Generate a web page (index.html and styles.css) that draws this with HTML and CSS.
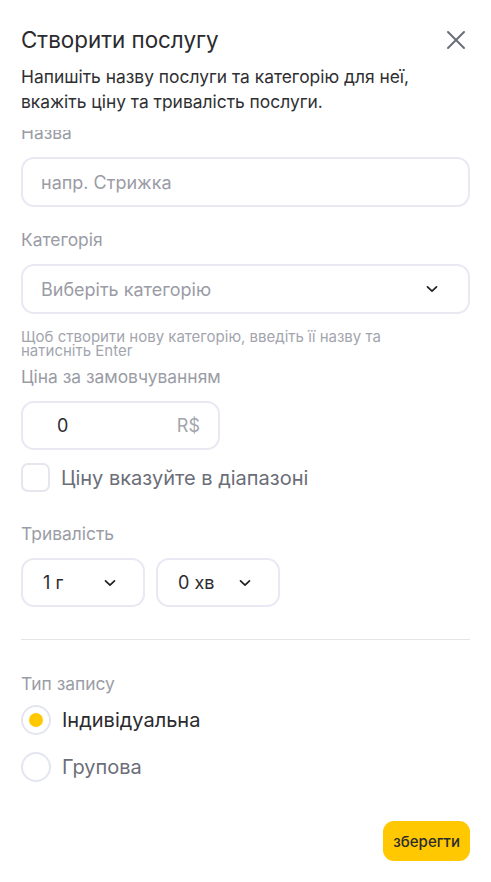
FILE: index.html
```html
<!DOCTYPE html>
<html lang="uk">
<head>
<meta charset="utf-8">
<link rel="stylesheet" href="styles.css">
</head>
<body>
<div class="modal">
  <div class="header">
    <div class="title-row">
      <h1 class="title">Створити послугу</h1>
      <button class="close" aria-label="close">
        <svg width="20" height="20" viewBox="0 0 20 20"><path d="M2 2 L18 18 M18 2 L2 18" stroke="#6b6e78" stroke-width="2" stroke-linecap="round" fill="none"/></svg>
      </button>
    </div>
    <p class="desc">Напишіть назву послуги та категорію для неї, вкажіть ціну та тривалість послуги.</p>
  </div>
  <div class="scroll">
    <div class="content">
      <label class="label">Назва</label>
      <div class="input wide"><span class="placeholder">напр. Стрижка</span></div>

      <label class="label mt">Категорія</label>
      <div class="input wide select"><span class="placeholder">Виберіть категорію</span>
        <svg class="chev" width="12" height="8" viewBox="0 0 12 8"><path d="M1.5 1.8 L6 6.2 L10.5 1.8" stroke="#222" stroke-width="1.7" fill="none" stroke-linecap="round" stroke-linejoin="round"/></svg>
      </div>
      <p class="hint">Щоб створити нову категорію, введіть її назву та натисніть Enter</p>

      <label class="label after-hint">Ціна за замовчуванням</label>
      <div class="input price"><span class="value">0</span><span class="currency">R$</span></div>

      <div class="check-row">
        <span class="checkbox"></span>
        <span class="check-text">Ціну вказуйте в діапазоні</span>
      </div>

      <label class="label mt2">Тривалість</label>
      <div class="duration">
        <div class="input small"><span class="value">1 г</span>
          <svg class="chev" width="12" height="8" viewBox="0 0 12 8"><path d="M1.5 1.8 L6 6.2 L10.5 1.8" stroke="#222" stroke-width="1.7" fill="none" stroke-linecap="round" stroke-linejoin="round"/></svg>
        </div>
        <div class="input small"><span class="value">0 хв</span>
          <svg class="chev" width="12" height="8" viewBox="0 0 12 8"><path d="M1.5 1.8 L6 6.2 L10.5 1.8" stroke="#222" stroke-width="1.7" fill="none" stroke-linecap="round" stroke-linejoin="round"/></svg>
        </div>
      </div>

      <hr class="divider">

      <label class="label mt3">Тип запису</label>
      <div class="radio-row first">
        <span class="radio checked"><span class="dot"></span></span>
        <span class="radio-text dark">Індивідуальна</span>
      </div>
      <div class="radio-row second">
        <span class="radio"></span>
        <span class="radio-text">Групова</span>
      </div>

      <div class="actions">
        <button class="save">зберегти</button>
      </div>
    </div>
  </div>
</div>
</body>
</html>
```

FILE: styles.css
```css
* { box-sizing: border-box; }
html, body { margin: 0; padding: 0; background: #fff; }
body { font-family: Inter, "Noto Sans", sans-serif; color: #2b2b2e; }
.modal { width: 491px; height: 882px; background: #fff; overflow: hidden; display: flex; flex-direction: column; }
.header { padding: 25px 21px 0 21px; }
.title-row { display: flex; justify-content: space-between; align-items: center; }
.title { margin: 0; font-size: 22.4px; font-weight: 400; line-height: 30px; color: #2b2b2e; }
.close { border: 0; background: none; padding: 0; margin-right: 4px; width: 20px; height: 20px; display: flex; }
.desc { margin: 9px 0 0 0; font-size: 17.4px; line-height: 25px; color: #2f2f33; }
.scroll { flex: 1; overflow: hidden; margin-top: 16px; }
.content { padding: 0 21px; margin-top: -7px; display: flex; flex-direction: column; }
.label { display: block; font-size: 17.4px; line-height: 20px; color: #9a9ca6; }
.label.mt { margin-top: 23px; }
.label.after-hint { margin-top: 9px; }
.label.mt2 { margin-top: 32px; }
.label.mt3 { margin-top: 34px; }
.input { margin-top: 14px; height: 50px; border: 2px solid #e8e9f3; border-radius: 13px; display: flex; align-items: center; font-size: 18px; }
.input.wide { width: 449px; padding: 0 18px; }
.select { justify-content: space-between; }
.select .chev { margin-right: 12px; }
.placeholder { color: #9a9ca6; }
.value { color: #2b2b2e; }
.hint { margin: 16px 0 0 0; max-width: 395px; font-size: 15px; line-height: 14px; color: #a3a5ae; }
.price { width: 199px; height: 49px; padding: 0 18px 0 34px; justify-content: space-between; }
.currency { color: #a3a5ae; }
.check-row { display: flex; align-items: center; margin-top: 13px; gap: 11px; }
.checkbox { width: 29px; height: 29px; border: 2px solid #e5e6ee; border-radius: 7px; }
.check-text { font-size: 20px; line-height: 24px; color: #6b6e78; }
.duration { display: flex; gap: 11px; }
.input.small { width: 124px; height: 49px; padding: 0 27px 0 20px; justify-content: space-between; }
.divider { border: 0; border-top: 1px solid #e4e4e8; margin: 32px 0 0 0; width: 449px; }
.radio-row { display: flex; align-items: center; gap: 11px; }
.radio-row.first { margin-top: 11px; }
.radio-row.second { margin-top: 17px; }
.radio { width: 30px; height: 30px; border: 2px solid #e4e6ef; border-radius: 50%; display: flex; align-items: center; justify-content: center; }
.dot { width: 14px; height: 14px; border-radius: 50%; background: #ffc800; }
.radio-text { font-size: 20px; line-height: 24px; color: #6b6e78; }
.radio-text.dark { color: #2b2b2e; }
.actions { display: flex; justify-content: flex-end; margin-top: 39px; }
.save { background: #ffc800; border: 0; border-radius: 11px; height: 40px; padding: 0 10px; font-family: Inter, sans-serif; font-size: 15px; color: #2b2b2e; font-weight: 500; }
```
